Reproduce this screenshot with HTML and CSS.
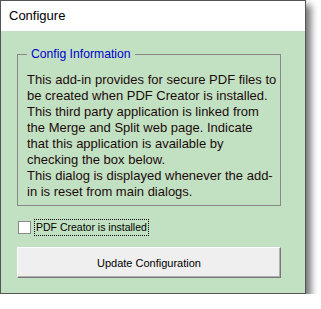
FILE: index.html
```html
<!DOCTYPE html>
<html lang="en">
<head>
    <meta charset="UTF-8">
    <title>Configure</title>
    <link rel="stylesheet" href="styles.css">
</head>
<body>
  <article class="dialog">
    <header class="titlebar">Configure</header>
    <div class="content">
      <fieldset class="group">
        <legend>Config Information</legend>
        <p>This add-in provides for secure PDF files to<br>
        be created when PDF Creator is installed.<br>
        This third party application is linked from<br>
        the Merge and Split web page. Indicate<br>
        that this application is available by<br>
        checking the box below.<br>
        This dialog is displayed whenever the add-<br>
        in is reset from main dialogs.</p>
      </fieldset>
      <label class="check">
        <span class="box"></span>
        <span class="label-text">PDF Creator is installed</span>
      </label>
      <button type="button" class="update">Update Configuration</button>
    </div>
  </article>
</body>
</html>
```

FILE: styles.css
```css
body {
    margin: 0;
    background: #fff;
    font-family: "Liberation Sans", sans-serif;
}

.dialog {
    width: 304px;
    height: 292px;
    border: 1px solid #555;
    background: #c2e0c2;
    box-shadow: 5px 5px 7px rgba(0, 0, 0, 0.55);
    display: flex;
    flex-direction: column;
}

.titlebar {
    height: 30px;
    background: #fff;
    font-size: 13px;
    line-height: 30px;
    padding-left: 8px;
    color: #000;
}

.content {
    padding: 16px 24px 0 16px;
}

.group {
    margin: 0;
    padding: 11px 0 5px 9px;
    border: 1px solid #888;
}

.group legend {
    color: #0000cc;
    font-size: 12.2px;
    padding: 0 4px;
    margin-left: 0;
}

.group p {
    margin: 0;
    font-size: 13px;
    line-height: 16px;
    color: #1c0c0c;
    white-space: nowrap;
}

.check {
    display: flex;
    align-items: center;
    gap: 3px;
    margin: 13px 0 11px 1px;
    font-size: 10.5px;
}

.box {
    width: 11px;
    height: 11px;
    background: #fff;
    border: 1px solid #8a8a8a;
}

.label-text {
    border: 1px dotted #000;
    padding: 0 1px;
    line-height: 15px;
}

.update {
    display: block;
    width: 264px;
    height: 31px;
    background: #efefef;
    border: 1px solid #fff;
    border-right-color: #777;
    border-bottom-color: #777;
    box-shadow: inset -1px -1px 0 #b0b0b0;
    font-family: "Liberation Sans", sans-serif;
    font-size: 11px;
    color: #000;
}
```
